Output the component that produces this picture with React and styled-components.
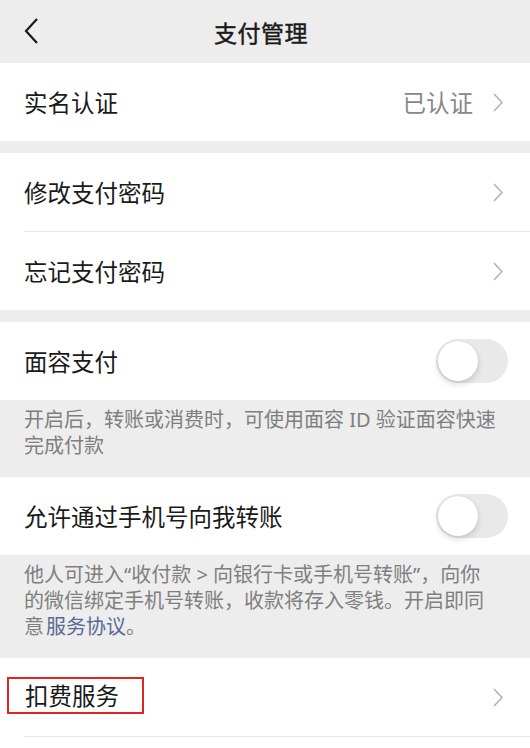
import React from 'react';
import styled, { createGlobalStyle } from 'styled-components';

const GlobalStyle = createGlobalStyle`
  body {
    margin: 0;
    background: #ededed;
    font-family: "Noto Sans CJK SC", "Noto Sans", sans-serif;
    color: #1a1a1a;
  }
`;

const Chevron = () => (
  <svg width="10" height="19" viewBox="0 0 10 19">
    <path d="M1 1 L9 9.5 L1 18" fill="none" stroke="#b2b2b2" strokeWidth="1.6" />
  </svg>
);

const BackIcon = () => (
  <svg width="14" height="26" viewBox="0 0 14 26">
    <path d="M13 1 L2 13 L13 25" fill="none" stroke="#1a1a1a" strokeWidth="2.2" />
  </svg>
);

const App = () => {
  return (
    <>
      <GlobalStyle />
      <Page>
        <Header>
          <Back><BackIcon /></Back>
          <Title>支付管理</Title>
        </Header>

        <Group>
          <Row>
            <Label>实名认证</Label>
            <Value>已认证</Value>
            <Chevron />
          </Row>
        </Group>

        <Group>
          <Row>
            <Label>修改支付密码</Label>
            <Chevron />
          </Row>
          <Row>
            <Label>忘记支付密码</Label>
            <Chevron />
          </Row>
        </Group>

        <Group $last>
          <Row>
            <Label>面容支付</Label>
            <Switch $on={false}><Knob /></Switch>
          </Row>
        </Group>
        <Note>
          开启后，转账或消费时，可使用面容 ID 验证面容快速<br />
          完成付款
        </Note>

        <Group $last>
          <Row>
            <Label>允许通过手机号向我转账</Label>
            <Switch $on={false}><Knob /></Switch>
          </Row>
        </Group>
        <Note>
          他人可进入“收付款 &gt; 向银行卡或手机号转账”，向你<br />
          的微信绑定手机号转账，收款将存入零钱。开启即同<br />
          意<Link>服务协议</Link>。
        </Note>

        <Group $last>
          <Row>
            <Highlight>
              <Label>扣费服务</Label>
            </Highlight>
            <Chevron />
          </Row>
          <Row />
        </Group>
      </Page>
    </>
  );
};

export default App;

const Page = styled.div`
  width: 530px;
  height: 748px;
  overflow: hidden;
`;

const Header = styled.header`
  height: 63px;
  display: flex;
  align-items: center;
  justify-content: center;
  position: relative;
  background: #ededed;
`;

const Back = styled.div`
  position: absolute;
  left: 24px;
  top: 18px;
  display: flex;
`;

const Title = styled.h1`
  margin: 0 0 0 -8px;
  font-size: 23px;
  font-weight: 400;
  color: #1a1a1a;
  letter-spacing: 0.5px;
  -webkit-text-stroke: 0.45px #1a1a1a;
`;

const Group = styled.div`
  background: #fff;
  margin-bottom: ${(p) => (p.$last ? '0' : '12px')};
`;

const Row = styled.div`
  height: 78px;
  margin-left: 24px;
  padding-right: 27px;
  display: flex;
  align-items: center;

  & + & {
    border-top: 1px solid #e6e6e6;
  }
`;

const Label = styled.span`
  flex: 1;
  font-size: 23.5px;
  color: #1a1a1a;
`;

const Value = styled.span`
  font-size: 23.5px;
  color: #888;
  margin-right: 20px;
`;

const Switch = styled.div`
  width: 72px;
  height: 44px;
  margin-right: -5px;
  border-radius: 22px;
  background: ${(p) => (p.$on ? '#07c160' : '#e9e9ea')};
  padding: 2px;
  box-sizing: border-box;
  display: flex;
  justify-content: ${(p) => (p.$on ? 'flex-end' : 'flex-start')};
`;

const Knob = styled.div`
  width: 40px;
  height: 40px;
  border-radius: 50%;
  background: #fff;
  box-shadow: 0 3px 6px rgba(0, 0, 0, 0.16), 0 0 1px rgba(0, 0, 0, 0.12);
`;

const Note = styled.p`
  margin: 0;
  padding: 7px 8px 18px 24px;
  font-family: "Noto Sans", "Noto Sans CJK SC", sans-serif;
  font-size: 20px;
  line-height: 26px;
  white-space: nowrap;
  color: #7f7f7f;
`;

const Link = styled.span`
  color: #576b95;
  margin-left: 2px;
`;

const Highlight = styled.div`
  flex: 1;
  display: flex;
  align-items: center;
  margin: -4px 0 0 -17px;

  & > span {
    flex: 0 0 auto;
    box-sizing: border-box;
    width: 137px;
    height: 37px;
    line-height: 33px;
    padding-left: 16px;
    border: 2px solid #e02424;
  }
`;
